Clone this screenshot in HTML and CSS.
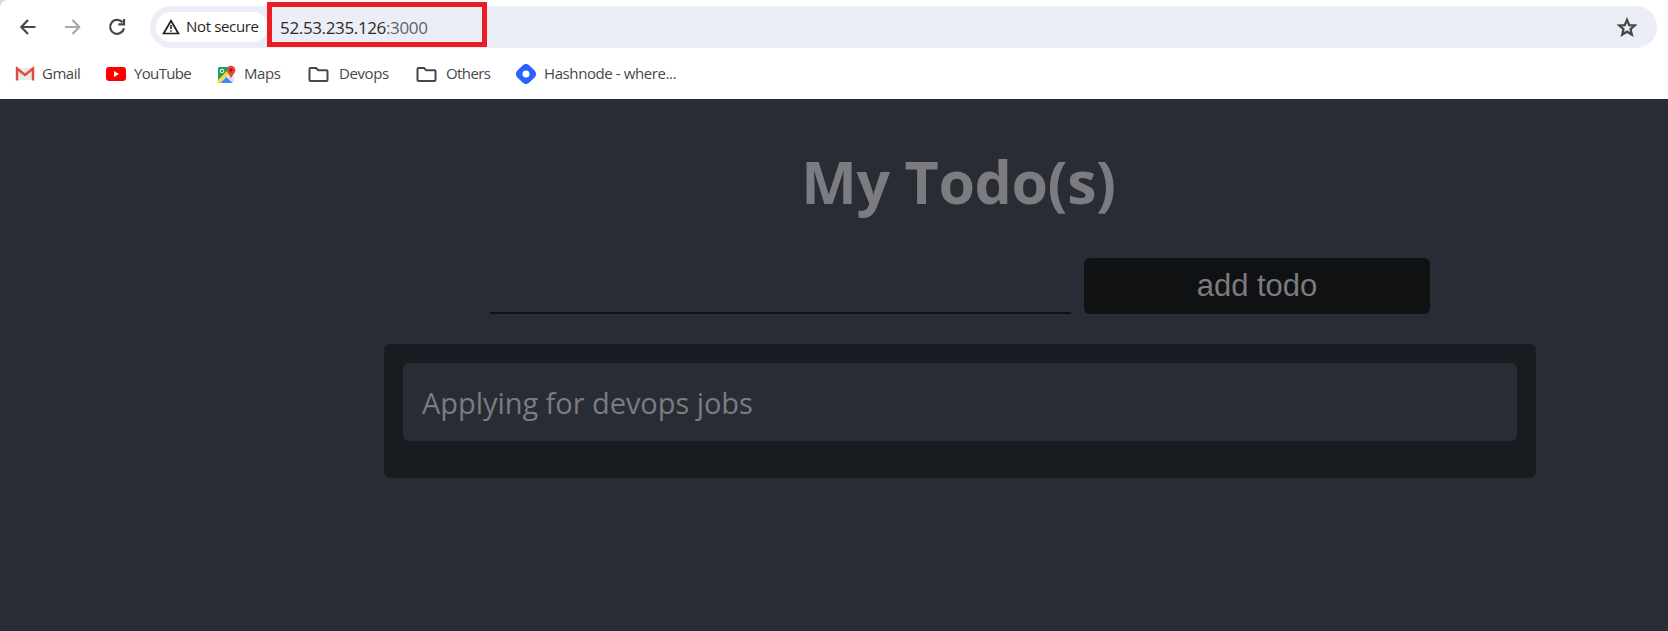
FILE: index.html
```html
<!DOCTYPE html>
<html lang="en">
<head>
<meta charset="utf-8">
<title>My Todo(s)</title>
<link rel="stylesheet" href="styles.css">
</head>
<body>
<div class="frame">
<header class="browser">
  <div class="toolbar">
    <svg class="nav" width="20" height="20" viewBox="0 0 20 20"><path d="M17.500 10H3.500M10 3L3.300 10L10 17"/></svg>
    <svg class="nav nav-off" width="20" height="20" viewBox="0 0 20 20"><path d="M2 10H16M9.500 3L16.200 10L9.500 17"/></svg>
    <svg class="nav" width="20" height="20" viewBox="0 0 20 20"><path d="M15.500 5.300A7 7 0 1 0 17 11.300M17 2V7.300H11.300"/></svg>
    <div class="omnibox">
      <div class="chip">
        <svg width="18" height="16" viewBox="0 0 18 16"><path d="M9 1.700L16.400 14.500H1.600Z" fill="none" stroke="#1f1f1f" stroke-width="1.700"/><path d="M9 6V10M9 11.200V12.800" stroke="#1f1f1f" stroke-width="1.500"/></svg>
        <span class="secure">Not secure</span>
      </div>
      <div class="address"><span class="url">52.53.235.126<span class="port">:3000</span></span></div>
      <svg class="star" width="22" height="21" viewBox="0 0 22 21"><path d="M11 2.900L13.200 8.100L18.700 8.500L14.500 12.200L15.800 17.600L11 14.700L6.200 17.600L7.500 12.200L3.300 8.500L8.800 8.100Z"/></svg>
    </div>
  </div>
  <nav class="bookmarks">
    <a class="mark gmail"><svg width="20" height="16" viewBox="0 0 20 16"><path d="M2 2H18V14H2Z" fill="#e9e9e9"/><path d="M2 14.500V2.500L10 9L18 2.500V14.500" fill="none" stroke="#dd4b3e" stroke-width="2.400"/></svg><span>Gmail</span></a>
    <a class="mark youtube"><svg width="20" height="14" viewBox="0 0 20 14"><rect width="20" height="14" rx="3" fill="#f00"/><path d="M8 4L13 7L8 10Z" fill="#fff"/></svg><span>YouTube</span></a>
    <a class="mark maps"><svg width="19" height="19" viewBox="0 0 19 19"><rect x="1" y="2" width="16" height="16" rx="1.500" fill="#dfe3e6"/><path d="M1 3.500Q1 2 2.500 2H14L1 16Z" fill="#1fa15d"/><path d="M1 15L13 3L15 5L3 18H1Z" fill="#fdd835"/><path d="M3.500 18L9.500 12L15.500 18Z" fill="#4285f4"/><circle cx="5" cy="6" r="1.800" fill="none" stroke="#fff"/><path d="M14 14C13.500 10 9.800 8.500 9.800 5A4.300 4.300 0 0 1 18.400 5C18.400 8.500 14.500 10 14 14Z" fill="#e84335"/><circle cx="14" cy="5" r="1.500" fill="#8b1d17"/></svg><span>Maps</span></a>
    <a class="mark devops"><svg class="folder" width="21" height="17" viewBox="0 0 21 17"><path d="M2.500 2H8L10.200 4.300H18.500Q19.500 4.300 19.500 5.300V14Q19.500 15 18.500 15H2.500Q1.500 15 1.500 14V3Q1.500 2 2.500 2Z"/></svg><span>Devops</span></a>
    <a class="mark others"><svg class="folder" width="21" height="17" viewBox="0 0 21 17"><path d="M2.500 2H8L10.200 4.300H18.500Q19.500 4.300 19.500 5.300V14Q19.500 15 18.500 15H2.500Q1.500 15 1.500 14V3Q1.500 2 2.500 2Z"/></svg><span>Others</span></a>
    <a class="mark hashnode"><svg width="20" height="20" viewBox="0 0 20 20"><path fill-rule="evenodd" fill="#2962ff" d="M1.400 6.600L6.600 1.400Q10 -1.500 13.400 1.400L18.600 6.600Q21.500 10 18.600 13.400L13.400 18.600Q10 21.500 6.600 18.600L1.400 13.400Q-1.500 10 1.400 6.600ZM10 6.500A3.500 3.500 0 1 0 10 13.500A3.500 3.500 0 1 0 10 6.500Z"/></svg><span>Hashnode - where...</span></a>
  </nav>
</header>
</div>
<main class="app">
  <h1 class="title">My Todo(s)</h1>
  <form class="add">
    <input class="entry" type="text" aria-label="Todo">
    <button class="submit" type="button">add todo</button>
  </form>
  <ul class="list"><li class="item">Applying for devops jobs</li></ul>
</main>
</body>
</html>
```
FILE: styles.css
```css
* { box-sizing: border-box; }
body {
  margin: 0;
  height: 631px;
  overflow: hidden;
  background: #282c35;
  font-family: "Open Sans", "Noto Sans", sans-serif;
}
.frame { background: #d3dae3; }
.browser { height: 99px; padding-top: 6px; background: #fff; border-top-left-radius: 8px; }
.toolbar { display: flex; align-items: center; height: 42px; padding: 0 11px 0 18px; }
.nav { flex: none; margin-right: 24.7px; fill: none; stroke: #474747; stroke-width: 2.2; }
.nav-off { stroke: #a9a9a9; }
.omnibox { flex: 1; display: flex; align-items: center; height: 42px; margin-left: -2px; padding: 0 19px 0 6px; border-radius: 21px; background: #ebeef7; }
.chip { display: flex; align-items: center; width: 112px; height: 30px; padding-left: 6px; border-radius: 15px; background: #fff; }
.secure { margin: -2px 0 0 6px; font-size: 15px; font-weight: 500; letter-spacing: -0.35px; color: #1f1f1f; white-space: nowrap; }
.address { display: flex; align-items: center; width: 220px; height: 45px; margin: -5px 0 0 -1px; padding: 5px 0 0 8px; border: 5px solid #ed1c24; }
.url { font-size: 17px; letter-spacing: -0.36px; color: #2b2b2d; }
.port { color: #5f6368; }
.star { margin-left: auto; fill: none; stroke: #474747; stroke-width: 2.3; }
.bookmarks { display: flex; height: 51px; }
.mark { display: flex; align-items: center; height: 52px; font-size: 15px; line-height: 20px; letter-spacing: -0.4px; color: #474747; white-space: nowrap; }
.mark svg { flex: none; }
.mark span { margin-top: -2px; }
.folder { fill: none; stroke: #474747; stroke-width: 2; }
.gmail { width: 91px; margin-left: 15px; gap: 7px; letter-spacing: -0.5px; }
.youtube { width: 111px; gap: 8px; letter-spacing: -0.65px; }
.maps { width: 91px; gap: 8px; letter-spacing: -0.4px; }
.devops { width: 108px; gap: 10px; }
.others { width: 100px; gap: 9px; letter-spacing: -0.6px; }
.hashnode { gap: 8px; letter-spacing: -0.4px; }
.app { height: 532px; padding: 42px 0 0 252px; border-bottom: 1px solid #2b2733; }
.title { margin: 0; height: 80px; padding-right: 3px; line-height: 80px; text-align: center; font-size: 59px; letter-spacing: -0.4px; color: #7b7b80; }
.add { display: flex; justify-content: center; gap: 13px; margin-top: 37px; height: 56px; }
.entry { width: 581px; padding: 0; border: 0; border-bottom: 2px solid #0f1113; background: none; }
.submit { width: 346px; padding: 0; border: 0; border-radius: 6px; background: #0f1113; color: #7b7b80; font: 31px "Liberation Sans", sans-serif; }
.list { width: 1152px; height: 134px; margin: 30px auto 0; padding: 19px; border-radius: 6px; background: #181b1f; list-style: none; }
.item { display: flex; align-items: center; height: 78px; padding-left: 19px; border-radius: 6px; background: #282c35; color: #7b7b80; font-size: 29px; letter-spacing: -0.05px; }
```
